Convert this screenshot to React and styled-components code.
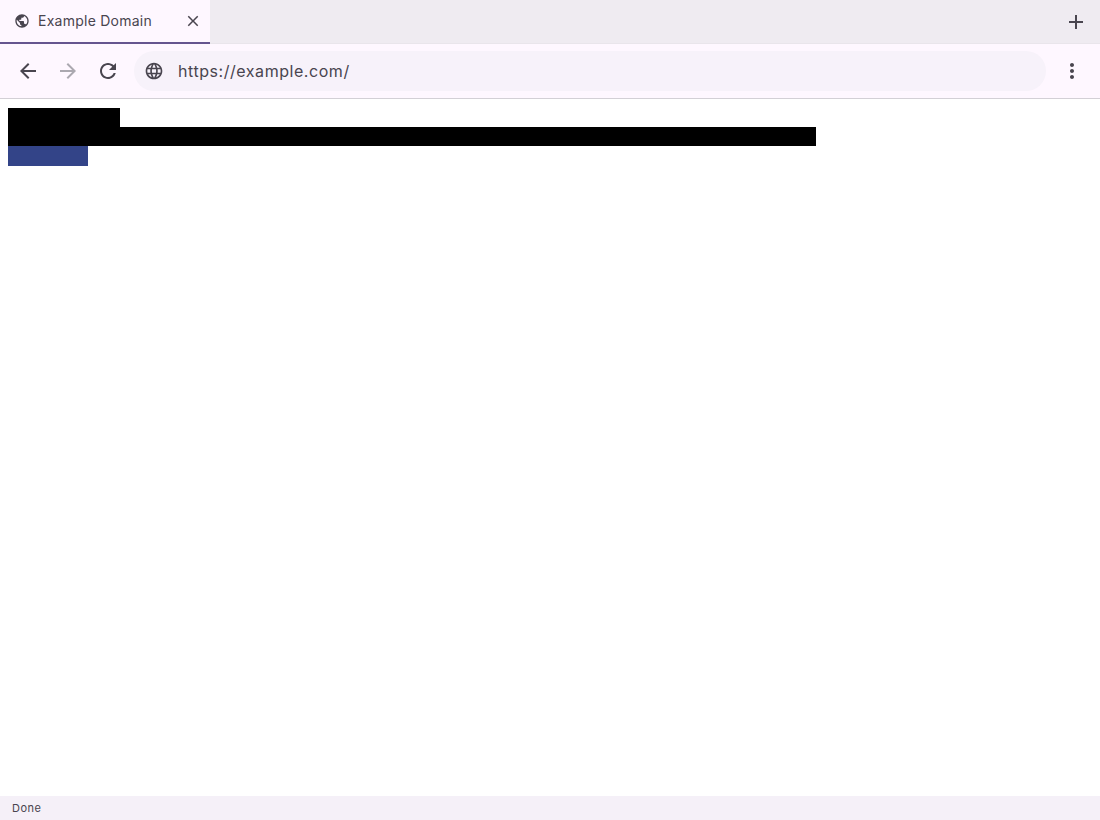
import React from "react";
import styled, { createGlobalStyle } from "styled-components";

const Global = createGlobalStyle`
  html, body { margin: 0; padding: 0; height: 100%; background: #fff; }
  #root { height: 100%; }
`;

const Window = styled.div`
  width: 1100px;
  height: 820px;
  display: flex;
  flex-direction: column;
  overflow: hidden;
  font-family: Inter, "Liberation Sans", sans-serif;
  color: #49454f;
`;

const TabBar = styled.div`
  height: 44px;
  flex: none;
  display: flex;
  align-items: stretch;
  justify-content: space-between;
  background: #efebf1;
  border-bottom: 1px solid #e9e5eb;
  box-sizing: border-box;
`;

const Tab = styled.div`
  width: 210px;
  height: 44px;
  box-sizing: border-box;
  display: flex;
  align-items: center;
  padding: 0 8px 0 14px;
  background: #fef7ff;
  border-bottom: 2px solid #65558f;
`;

const TabTitle = styled.span`
  flex: 1;
  margin: 0 0 2px 8px;
  font-size: 14px;
  letter-spacing: 0.25px;
  color: #49454f;
  white-space: nowrap;
`;

const NewTab = styled.div`
  width: 48px;
  display: flex;
  align-items: center;
  justify-content: center;
`;

const Toolbar = styled.div`
  height: 54px;
  flex: none;
  display: flex;
  align-items: center;
  background: #fef7ff;
  padding: 0 8px;
  border-bottom: 1px solid #d3d0d6;
  box-sizing: content-box;
`;

const NavButton = styled.div`
  width: 40px;
  height: 40px;
  flex: none;
  display: flex;
  align-items: center;
  justify-content: center;
`;

const UrlBar = styled.div`
  flex: 1;
  height: 40px;
  margin: 0 6px;
  display: flex;
  align-items: center;
  padding: 0 10px;
  border-radius: 20px;
  background: #f7f2fa;
`;

const UrlText = styled.span`
  margin-left: 14px;
  font-size: 16px;
  letter-spacing: 0.55px;
  color: #49454f;
`;

const Page = styled.main`
  flex: 1;
  background: #fff;
  padding: 9px 8px 0;
`;

const Block = styled.div`
  height: ${(p) => p.$h}px;
  width: ${(p) => p.$w}px;
  background: ${(p) => p.$color};
`;

const StatusBar = styled.div`
  height: 24px;
  flex: none;
  display: flex;
  align-items: center;
  padding-left: 12px;
  background: #f5f0f8;
  font-size: 11px;
  letter-spacing: 0.5px;
  color: #49454f;
`;

const Icon = ({ size = 24, color = "#49454f", d }) => (
  <svg width={size} height={size} viewBox="0 0 24 24" fill={color} aria-hidden="true">
    <path d={d} />
  </svg>
);

const PUBLIC =
  "M12 2C6.48 2 2 6.48 2 12s4.48 10 10 10 10-4.48 10-10S17.52 2 12 2zm-1 17.93c-3.95-.49-7-3.85-7-7.93 0-.62.08-1.21.21-1.79L9 15v1c0 1.1.9 2 2 2v1.93zm6.9-2.54c-.26-.81-1-1.39-1.9-1.39h-1v-3c0-.55-.45-1-1-1H8v-2h2c.55 0 1-.45 1-1V7h2c1.1 0 2-.9 2-2v-.41c2.93 1.19 5 4.06 5 7.41 0 2.08-.8 3.97-2.1 5.39z";
const CLOSE =
  "M19 6.41 17.59 5 12 10.59 6.41 5 5 6.41 10.59 12 5 17.59 6.41 19 12 13.41 17.59 19 19 17.59 13.41 12z";
const PLUS = "M19 13h-6v6h-2v-6H5v-2h6V5h2v6h6v2z";
const BACK = "M20 11H7.83l5.59-5.59L12 4l-8 8 8 8 1.41-1.41L7.83 13H20v-2z";
const FORWARD = "M12 4l-1.41 1.41L16.17 11H4v2h12.17l-5.58 5.59L12 20l8-8z";
const RELOAD =
  "M17.65 6.35C16.2 4.9 14.21 4 12 4c-4.42 0-7.99 3.58-7.99 8s3.57 8 7.99 8c3.73 0 6.84-2.55 7.73-6h-2.08c-.82 2.33-3.04 4-5.65 4-3.31 0-6-2.69-6-6s2.69-6 6-6c1.66 0 3.14.69 4.22 1.78L13 11h7V4l-2.35 2.35z";
const LANGUAGE =
  "M11.99 2C6.47 2 2 6.48 2 12s4.47 10 9.99 10C17.52 22 22 17.52 22 12S17.52 2 11.99 2zm6.93 6h-2.95c-.32-1.25-.78-2.45-1.38-3.56 1.84.63 3.37 1.91 4.33 3.56zM12 4.04c.83 1.2 1.48 2.53 1.91 3.96h-3.82c.43-1.43 1.08-2.76 1.91-3.96zM4.26 14C4.1 13.36 4 12.69 4 12s.1-1.36.26-2h3.38c-.08.66-.14 1.32-.14 2s.06 1.34.14 2H4.26zm.82 2h2.95c.32 1.25.78 2.45 1.38 3.56-1.84-.63-3.37-1.9-4.33-3.56zm2.95-8H5.08c.96-1.66 2.49-2.93 4.33-3.56C8.81 5.55 8.35 6.75 8.03 8zM12 19.96c-.83-1.2-1.48-2.53-1.91-3.96h3.82c-.43 1.43-1.08 2.76-1.91 3.96zM14.34 14H9.66c-.09-.66-.16-1.32-.16-2s.07-1.35.16-2h4.68c.09.65.16 1.32.16 2s-.07 1.34-.16 2zm.25 5.56c.6-1.11 1.06-2.31 1.38-3.56h2.95c-.96 1.65-2.49 2.93-4.33 3.56zM16.36 14c.08-.66.14-1.32.14-2s-.06-1.34-.14-2h3.38c.16.64.26 1.31.26 2s-.1 1.36-.26 2h-3.38z";
const MORE =
  "M12 8c1.1 0 2-.9 2-2s-.9-2-2-2-2 .9-2 2 .9 2 2 2zm0 2c-1.1 0-2 .9-2 2s.9 2 2 2 2-.9 2-2-.9-2-2-2zm0 6c-1.1 0-2 .9-2 2s.9 2 2 2 2-.9 2-2-.9-2-2-2z";

export default function App() {
  return (
    <>
      <Global />
      <Window>
        <TabBar>
          <Tab>
            <Icon size={16} d={PUBLIC} />
            <TabTitle>Example Domain</TabTitle>
            <Icon size={18} d={CLOSE} />
          </Tab>
          <NewTab>
            <Icon d={PLUS} />
          </NewTab>
        </TabBar>
        <Toolbar>
          <NavButton>
            <Icon d={BACK} />
          </NavButton>
          <NavButton>
            <Icon d={FORWARD} color="#aba8b0" />
          </NavButton>
          <NavButton>
            <Icon d={RELOAD} />
          </NavButton>
          <UrlBar>
            <Icon size={20} d={LANGUAGE} />
            <UrlText>https://example.com/</UrlText>
          </UrlBar>
          <NavButton>
            <Icon d={MORE} />
          </NavButton>
        </Toolbar>
        <Page>
          <Block $w={112} $h={19} $color="#000" />
          <Block $w={808} $h={19} $color="#000" />
          <Block $w={80} $h={20} $color="#334488" />
        </Page>
        <StatusBar>Done</StatusBar>
      </Window>
    </>
  );
}
